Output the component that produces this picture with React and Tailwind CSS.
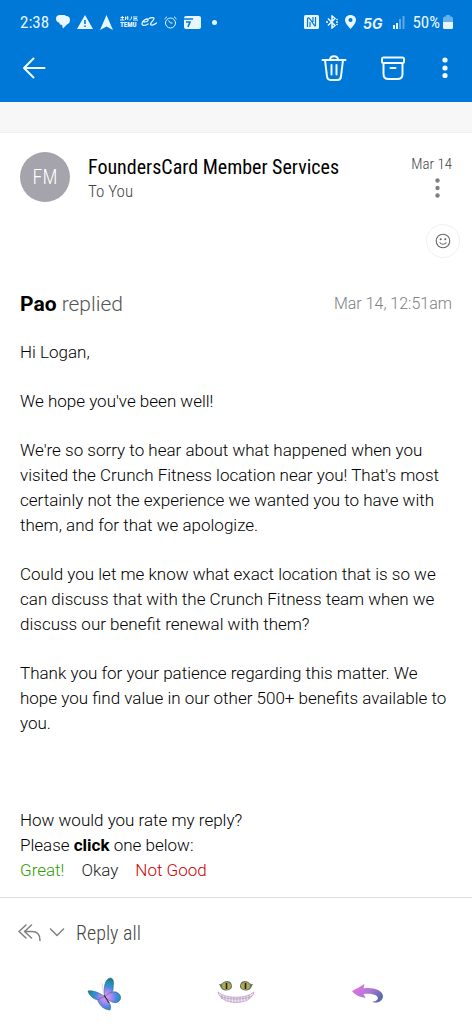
import React from "react";

const CONDENSED = "font-['Roboto_Condensed',Roboto,sans-serif] font-light";

const PARAGRAPHS = [
  "Hi Logan,",
  "We hope you've been well!",
  "We're so sorry to hear about what happened when you visited the Crunch Fitness location near you! That's most certainly not the experience we wanted you to have with them, and for that we apologize.",
  "Could you let me know what exact location that is so we can discuss that with the Crunch Fitness team when we discuss our benefit renewal with them?",
  "Thank you for your patience regarding this matter. We hope you find value in our other 500+ benefits available to you.",
];

function StatusBar() {
  return (
    <div className="flex h-11 items-center justify-between pl-5 pr-[19px] text-[#e8f6ff]">
      <div className="flex items-center gap-[7px]">
        <span className="text-[17px] leading-6 font-normal">2:38</span>
        {/* Chat bubbles */}
        <svg width="14" height="14" viewBox="0 0 14 14" fill="currentColor">
          <path d="M4 0h4q1.500 0 2 1c3 0 4 2 4 4 0 3-2 4-3 4.500L7 13.500 6 10Q3.500 10 3 7.500 0 7 0 3.500 0 0 4 0z" />
        </svg>
        {/* Warning */}
        <svg width="16" height="14" viewBox="0 0 16 14">
          <path d="M8 0l8 14H0z" fill="currentColor" />
          <path d="M8 5v4M8 10.500v1.500" stroke="#0078d7" strokeWidth="1.600" />
        </svg>
        {/* Navigation arrow */}
        <svg width="13" height="15" viewBox="0 0 13 15" fill="currentColor">
          <path d="M6.500 0L13 15 6.500 11.500 0 15z" />
        </svg>
        {/* Shopping app */}
        <svg width="18" height="12" viewBox="0 0 18 12">
          <path
            d="M0.500 1.500h3.500M2.300 0v4M0 4h4.500M5.500 0.500v3.500M5.500 2h3M7.700 0v4M9.500 4c1.500 0 2-1 2-3.500M13 1h4.500M13.500 2.500h3.500M13 4h5"
            fill="none"
            stroke="currentColor"
            strokeWidth="1"
          />
          <text x="0" y="11" fontSize="7" fontWeight="800" fill="currentColor">
            TEMU
          </text>
        </svg>
        {/* Looping e */}
        <svg className="-ml-1" width="16" height="10" viewBox="0 0 16 10" fill="none" stroke="currentColor" strokeWidth="1.300" strokeLinecap="round">
          <path d="M3 5c3 0 4.500-1 4-2.500C6 1 1.500 3.500 1 6.500c0 3 4 2 6 0.500M8 1.500C10 0.500 13 0 13 1.500c0 2-3.500 3.500-3.500 6 1 1.500 4 0 6-1.500" />
        </svg>
        {/* Alarm clock */}
        <svg width="13" height="13" viewBox="0 0 13 13" fill="none" stroke="currentColor">
          <circle cx="6.500" cy="7" r="5" />
          <path d="M0.500 3L3 0.700M12.500 3L10 0.700M4.500 4.500l2 2.500h2" />
        </svg>
        {/* Calendar card */}
        <svg width="17" height="13" viewBox="0 0 17 13">
          <rect width="17" height="13" rx="2" fill="currentColor" />
          <path d="M0 3h9M2 6h4L4 11" fill="none" stroke="#0078d7" strokeWidth="1.600" />
        </svg>
        <span className="ml-1 size-[5px] rounded-full bg-current" />
      </div>

      <div className="flex items-center gap-[7px]">
        {/* NFC */}
        <svg width="15" height="14" viewBox="0 0 15 14">
          <rect width="15" height="14" rx="1.500" fill="currentColor" />
          <path d="M3.500 12V3.500q1-1.500 2.500 0.500l4.500 6.500q1 1 1-0.500V2M6 12V7M9 2v5" fill="none" stroke="#0078d7" strokeWidth="1.200" />
        </svg>
        {/* Bluetooth */}
        <svg width="12" height="14" viewBox="0 0 12 14" fill="none" stroke="currentColor" strokeWidth="1.500">
          <path d="M2 3.500l7 7L6 13V1l3 2.500-7 7M0 7h2M10 7h2M10.500 5l1-1M10.500 9l1 1" />
        </svg>
        {/* Location */}
        <svg width="11" height="14" viewBox="0 0 11 14">
          <path d="M5.500 0C2 0 0 2.500 0 5c0 3.500 5.500 9 5.500 9S11 8.500 11 5c0-2.500-2-5-5.500-5z" fill="currentColor" />
          <circle cx="5.500" cy="5" r="2" fill="#0078d7" />
        </svg>
        <span className="pt-1 font-[Inter,sans-serif] text-sm leading-4 font-bold italic">5G</span>
        {/* Signal */}
        <svg className="ml-1" width="12" height="14" viewBox="0 0 12 14" fill="currentColor">
          <rect y="10" width="2" height="4" />
          <rect x="3" y="8" width="2" height="6" />
          <rect x="6" y="4" width="2" height="10" opacity="0.400" />
          <rect x="9.500" y="1" width="2" height="13" opacity="0.400" />
        </svg>
        <div className="flex items-center gap-[3px]">
          <span className="text-[17px] leading-6 font-normal">50%</span>
          <svg width="10" height="14" viewBox="0 0 10 14" fill="currentColor">
            <path d="M3 0h4v1.500h1.500Q10 2 10 3.500V7H0V3.500Q0 2 1.500 1.500H3z" opacity="0.450" />
            <path d="M0 7h10v5.500q0 1.500-1.500 1.500h-7Q0 14 0 12.500z" />
          </svg>
        </div>
      </div>
    </div>
  );
}

function Toolbar() {
  return (
    <div className="flex h-12 items-center justify-between pl-[22px] pr-6 text-[#f2faff]">
      <button type="button" aria-label="Back">
        <svg width="24" height="22" viewBox="0 0 24 22" fill="none" stroke="currentColor" strokeWidth="2" strokeLinecap="round" strokeLinejoin="round">
          <path d="M11.500 1.500L2 11l9.500 9.500M2 11h20.500" />
        </svg>
      </button>
      <div className="flex items-center">
        <button type="button" aria-label="Delete">
          <svg width="26" height="26" viewBox="0 0 26 26" fill="none" stroke="currentColor" strokeWidth="2" strokeLinecap="round" strokeLinejoin="round">
            <path d="M1.500 5h23M9 5c0-5 8-5 8 0M4 5l2 16.500Q6.500 25 9.500 25h7q3 0 3.500-3.500L22 5M10.500 10v9.500M15.500 10v9.500" />
          </svg>
        </button>
        <button type="button" aria-label="Archive" className="ml-[34px]">
          <svg width="24" height="24" viewBox="0 0 24 24" fill="none" stroke="currentColor" strokeWidth="2" strokeLinecap="round">
            <rect x="1" y="1.500" width="22" height="5.500" rx="1.500" />
            <path d="M2.500 7v11q0 5 5 5h9q5 0 5-5V7M9.500 12h5" />
          </svg>
        </button>
        <button type="button" aria-label="More options" className="ml-[37px]">
          <svg width="6" height="22" viewBox="0 0 6 22" fill="currentColor">
            <circle cx="3" cy="3" r="2.600" />
            <circle cx="3" cy="11" r="2.600" />
            <circle cx="3" cy="18.500" r="2.600" />
          </svg>
        </button>
      </div>
    </div>
  );
}

function MessageHeader() {
  return (
    <section className="px-5 pt-[19px]">
      <div className={`flex items-start ${CONDENSED}`}>
        <div className="flex size-[50px] shrink-0 items-center justify-center rounded-full bg-[#a5a3ab] text-xl text-white">
          FM
        </div>
        <div className="ml-[18px] grow pt-[3px]">
          <h1 className="text-xl leading-6 font-normal text-black">FoundersCard Member Services</h1>
          <p className="text-[17px] leading-6 text-[#444]">To You</p>
        </div>
        <div className="flex flex-col items-end">
          <span className="text-[15px] leading-6 whitespace-nowrap text-[#444]">Mar 14</span>
          <button type="button" aria-label="Message options" className="mt-[2px] mr-3">
            <svg width="5" height="20" viewBox="0 0 5 20" fill="#808080">
              <circle cx="2.500" cy="2.500" r="2.200" />
              <circle cx="2.500" cy="10" r="2.200" />
              <circle cx="2.500" cy="17.500" r="2.200" />
            </svg>
          </button>
        </div>
      </div>
      <div className="-mr-2 mt-[21px] flex justify-end">
        <button
          type="button"
          aria-label="Add reaction"
          className="flex size-[34px] items-center justify-center rounded-full border border-[#f0f0f0]"
        >
          <svg width="16" height="16" viewBox="0 0 16 16" fill="none" stroke="#666" strokeWidth="1.100" strokeLinecap="round">
            <circle cx="8" cy="8" r="6.800" />
            <path d="M5 9.800c1.200 2 4.800 2 6 0" />
            <circle cx="5.700" cy="6.300" r="0.500" fill="#666" />
            <circle cx="10.300" cy="6.300" r="0.500" fill="#666" />
          </svg>
        </button>
      </div>
    </section>
  );
}

function MessageBody() {
  return (
    <article className="px-5 pt-[34px] pb-[13px] font-[Roboto,sans-serif] text-[17px] leading-[25px] font-light text-black">
      <div className="mb-6 flex items-center justify-between">
        <h2 className="text-[21px] leading-6 text-[#555]">
          <strong className="font-bold text-black">Pao</strong> replied
        </h2>
        <time className="text-base leading-5 text-[#808080]">Mar 14, 12:51am</time>
      </div>
      <div className="space-y-6">
        {PARAGRAPHS.map((text) => (
          <p key={text}>{text}</p>
        ))}
      </div>
      <div className="mt-[72px]">
        <p>How would you rate my reply?</p>
        <p>
          Please <strong className="font-bold">click</strong> one below:
        </p>
        <div className="flex gap-[17px]">
          <a href="#great" className="text-[#2f9c00]">Great!</a>
          <a href="#okay" className="text-[#222]">Okay</a>
          <a href="#not-good" className="text-[#cc0000]">Not Good</a>
        </div>
      </div>
    </article>
  );
}

function ReplyBar() {
  return (
    <div className={`flex h-[70px] items-center border-t border-[#dedede] px-[18px] text-[#444] ${CONDENSED}`}>
      <button type="button" className="flex items-center">
        <svg width="24" height="18" viewBox="0 0 24 18" fill="none" stroke="#808080" strokeWidth="1.500" strokeLinecap="round" strokeLinejoin="round">
          <path d="M8 1L1 7.500 8 14M13.500 1L6.500 7.500l7 6.500M7 7.500h7c5 0 8 3 8 9" />
        </svg>
        <svg className="ml-[7px]" width="16" height="9" viewBox="0 0 16 9" fill="none" stroke="#808080" strokeWidth="1.500" strokeLinecap="round" strokeLinejoin="round">
          <path d="M1.500 1L8 7.500 14.500 1" />
        </svg>
        <span className="ml-[11px] text-xl leading-6">Reply all</span>
      </button>
    </div>
  );
}

function Butterfly() {
  return (
    <svg width="36" height="36" viewBox="0 0 36 36">
      <defs>
        <radialGradient id="wing" gradientUnits="userSpaceOnUse" cx="20" cy="21" r="20">
          <stop offset="0" stopColor="#e79af0" />
          <stop offset="0.300" stopColor="#a987ec" />
          <stop offset="0.500" stopColor="#4f86e6" />
          <stop offset="0.750" stopColor="#1b93ab" />
          <stop offset="1" stopColor="#236a78" />
        </radialGradient>
      </defs>
      <g fill="url(#wing)" stroke="#2c6a88" strokeWidth="0.600">
        <path d="M19 21C17 12 19 3 24 2c4 0 4 5 3 10 1 3-3 7-8 9z" />
        <path d="M19 21c3-4 9-7 13-4 4 3 3 7 0 9-4 2-9-1-13-5z" />
        <path d="M19 21C14 17 7 14 2 15c1 4 5 8 10 9 3 0 5-1 7-3z" />
        <path d="M19 21c-4 0-7 2-7 4 2 5 7 9 12 9 2-4-1-9-5-13z" />
      </g>
      <path d="M18 19l5 8" stroke="#3a3450" strokeWidth="1.200" />
      <path d="M18 19c-1-4-1-8-2-12" fill="none" stroke="#9a9aa8" strokeWidth="0.400" />
    </svg>
  );
}

function CatGrin() {
  return (
    <svg width="38" height="26" viewBox="0 0 38 26">
      <path d="M2 3c3 1 4-3 8-3 4 0 5 3 5 6-1 4-8 5-11 1zM36 3c-3 1-4-3-8-3-4 0-5 3-5 6 1 4 8 5 11 1z" fill="#5d7568" />
      <ellipse cx="9.500" cy="5" rx="4.500" ry="3.800" fill="#b2a951" />
      <ellipse cx="28.500" cy="5" rx="4.500" ry="3.800" fill="#b2a951" />
      <path d="M9.500 2v6M28.500 2v6" stroke="#24241b" strokeWidth="1.600" />
      <path d="M1 11c7 7 29 7 36 0-3 14-33 14-36 0z" fill="#f2eaf5" stroke="#cf9fda" strokeWidth="0.900" />
      <path d="M3 15c7 4 25 4 32 0" fill="none" stroke="#a58fb0" strokeWidth="0.600" />
      <path d="M5 14v4M8 15v4M11 16v4M14 16v5M17 16.500v4.500M20 16.500v4.500M23 16v5M26 16v4M29 15v4M32 14v4" stroke="#9687a0" strokeWidth="0.600" />
    </svg>
  );
}

function CurvedArrow() {
  return (
    <svg width="34" height="20" viewBox="0 0 34 20">
      <defs>
        <linearGradient id="arrow" x1="0" y1="0" x2="1" y2="0.600">
          <stop offset="0" stopColor="#ec70e4" />
          <stop offset="0.550" stopColor="#b578d8" />
          <stop offset="1" stopColor="#5b69ae" />
        </linearGradient>
      </defs>
      <path d="M1 7Q7 4 13.500 0L12.500 4.500C22 3 31 6 32 12c0 5-5 7-9 6.500-2-0.500-1-1-0.500-1 5-0.500 5.500-4.500 2.500-6C22 9.500 17 9.500 12.500 10l2 4C9 13 4 11 1 7z" fill="url(#arrow)" />
    </svg>
  );
}

function BottomNav() {
  return (
    <nav className="grid grid-cols-3 items-center px-[38px] pt-[9px] pb-3">
      <button type="button" aria-label="Recent apps" className="justify-self-center">
        <Butterfly />
      </button>
      <button type="button" aria-label="Home" className="justify-self-center">
        <CatGrin />
      </button>
      <button type="button" aria-label="Back" className="justify-self-center">
        <CurvedArrow />
      </button>
    </nav>
  );
}

export default function App() {
  return (
    <div className="flex min-h-screen flex-col bg-white">
      <header className={`bg-[#0078d7] pb-[10px] ${CONDENSED}`}>
        <StatusBar />
        <Toolbar />
      </header>
      <div className="h-[31px] border-b border-[#efefef] bg-[#f7f7f7]" />
      <main className="grow">
        <MessageHeader />
        <MessageBody />
      </main>
      <footer>
        <ReplyBar />
        <BottomNav />
      </footer>
    </div>
  );
}
